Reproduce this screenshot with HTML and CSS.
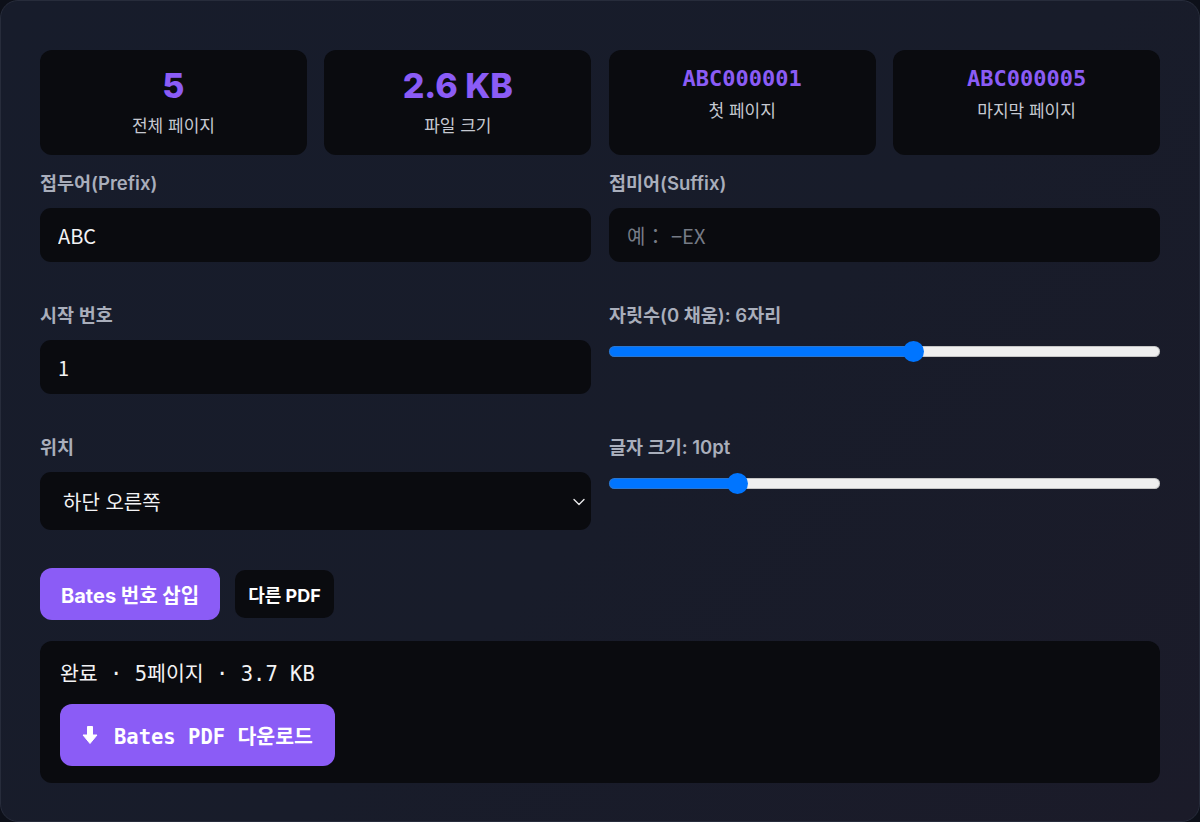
FILE: index.html
```html
<!DOCTYPE html>
<html lang="ko">
<head>
<meta charset="utf-8">
<title>Bates 번호 삽입</title>
<link rel="stylesheet" href="styles.css">
</head>
<body>
<main class="panel">
  <section class="stats">
    <div class="stat">
      <div class="stat-value">5</div>
      <div class="stat-label">전체 페이지</div>
    </div>
    <div class="stat">
      <div class="stat-value">2.6 KB</div>
      <div class="stat-label">파일 크기</div>
    </div>
    <div class="stat">
      <div class="stat-value mono">ABC000001</div>
      <div class="stat-label">첫 페이지</div>
    </div>
    <div class="stat">
      <div class="stat-value mono">ABC000005</div>
      <div class="stat-label">마지막 페이지</div>
    </div>
  </section>

  <section class="form">
    <label class="field">
      <span class="field-label">접두어(Prefix)</span>
      <input class="text-input" type="text" value="ABC">
    </label>
    <label class="field">
      <span class="field-label">접미어(Suffix)</span>
      <input class="text-input" type="text" placeholder="예： −EX">
    </label>
    <label class="field">
      <span class="field-label">시작 번호</span>
      <input class="text-input" type="number" value="1">
    </label>
    <label class="field">
      <span class="field-label">자릿수(0 채움): 6자리</span>
      <input class="range" type="range" min="1" max="10" value="6" style="--p: 0.5556">
    </label>
    <label class="field">
      <span class="field-label">위치</span>
      <span class="select-wrap">
        <select class="select">
          <option>하단 오른쪽</option>
          <option>하단 가운데</option>
          <option>하단 왼쪽</option>
        </select>
        <svg class="chevron" width="12" height="8" viewBox="0 0 12 8" aria-hidden="true">
          <path d="M1 1.5 L6 6.5 L11 1.5" fill="none" stroke="#e8e8ea" stroke-width="1.4" stroke-linecap="round" stroke-linejoin="round"/>
        </svg>
      </span>
    </label>
    <label class="field">
      <span class="field-label">글자 크기: 10pt</span>
      <input class="range" type="range" min="6" max="24" value="10" style="--p: 0.2222">
    </label>
  </section>

  <div class="actions">
    <button class="btn btn-primary" type="button">Bates 번호 삽입</button>
    <button class="btn btn-dark" type="button">다른 PDF</button>
  </div>

  <section class="result">
    <div class="result-text">완료 · 5페이지 · 3.7 KB</div>
    <button class="btn-download" type="button">
      <svg class="down-arrow" width="16" height="20" viewBox="0 0 16 20" aria-hidden="true">
        <path d="M5.5 1.5 H10.5 V10 H15 L8 18.5 L1 10 H5.5 Z" fill="#ffffff" stroke="#ffffff" stroke-width="1" stroke-linejoin="round"/>
      </svg>
      <span>Bates PDF 다운로드</span>
    </button>
  </section>
</main>
</body>
</html>
```

FILE: styles.css
```css
* {
  box-sizing: border-box;
}

html,
body {
  margin: 0;
  height: 100%;
}

body {
  background: #0d1019;
  font-family: Inter, "Noto Sans CJK KR", sans-serif;
  color: #e9eaee;
}

.panel {
  height: 822px;
  border: 1px solid #272c3b;
  border-radius: 18px;
  background: linear-gradient(135deg, #171c2b 0%, #181c2a 55%, #1b1b29 100%);
  padding: 49px 39px 0;
  display: flex;
  flex-direction: column;
}

/* summary cards */
.stats {
  display: grid;
  grid-template-columns: repeat(4, 1fr);
  gap: 17.5px;
}

.stat {
  height: 105px;
  background: #0a0b0f;
  border-radius: 12px;
  padding-top: 16px;
  display: flex;
  flex-direction: column;
  align-items: center;
  gap: 6px;
}

.stat-value {
  font-size: 34px;
  font-weight: 800;
  line-height: 1.2;
  color: #8b5cf6;
}

.stat-value.mono {
  font-family: "DejaVu Sans Mono", monospace;
  font-size: 22px;
  font-weight: 700;
}

.stat-label {
  font-family: "Noto Sans CJK KR", sans-serif;
  font-size: 17px;
  line-height: 24px;
  color: #c6c9d1;
}

/* settings form */
.form {
  margin-top: 16px;
  display: grid;
  grid-template-columns: 1fr 1fr;
  column-gap: 18px;
  row-gap: 41px;
  align-items: start;
}

.field {
  display: flex;
  flex-direction: column;
  gap: 13px;
}

.field-label {
  font-size: 18.5px;
  font-weight: 600;
  line-height: 24px;
  color: #a9aebb;
}

.text-input,
.select {
  width: 100%;
  border: none;
  outline: none;
  border-radius: 11px;
  background: #0a0b0f;
  color: #f3f3f5;
  font-family: "Noto Sans CJK KR", sans-serif;
  font-size: 20px;
}

.text-input {
  height: 54px;
  padding: 0 18px;
  -moz-appearance: textfield;
}

.text-input::-webkit-outer-spin-button,
.text-input::-webkit-inner-spin-button {
  -webkit-appearance: none;
  margin: 0;
}

.text-input::placeholder {
  color: #767b86;
}

.select-wrap {
  position: relative;
  display: block;
}

.select {
  height: 58px;
  padding: 0 40px 0 23px;
  -webkit-appearance: none;
  appearance: none;
}

.chevron {
  position: absolute;
  right: 6px;
  top: 26px;
  pointer-events: none;
}

/* sliders */
.range {
  -webkit-appearance: none;
  appearance: none;
  width: 100%;
  height: 22px;
  margin: 0;
  background: transparent;
}

.range::-webkit-slider-runnable-track {
  height: 11px;
  border-radius: 6px;
  background: linear-gradient(to right, #0075ff calc(10px + var(--p) * (100% - 21px)), #efefef 0);
  box-shadow: inset 0 0 0 1px rgba(120, 120, 120, 0.35);
}

.range::-webkit-slider-thumb {
  -webkit-appearance: none;
  appearance: none;
  width: 21px;
  height: 21px;
  margin-top: -5px;
  border-radius: 50%;
  background: #0075ff;
  border: none;
}

/* buttons */
.actions {
  margin-top: 38px;
  display: flex;
  align-items: center;
  gap: 15px;
}

.btn {
  border: none;
  color: #ffffff;
  font-family: Inter, "Noto Sans CJK KR", sans-serif;
  font-weight: 700;
  cursor: pointer;
}

.btn-primary {
  height: 52px;
  padding: 0 21px;
  border-radius: 12px;
  background: #8b5cf6;
  font-size: 20px;
}

.btn-dark {
  height: 48px;
  padding: 0 13px;
  border-radius: 10px;
  background: #0a0b0f;
  font-size: 18px;
}

/* result */
.result {
  margin-top: 21px;
  height: 142px;
  background: #0a0b0f;
  border-radius: 12px;
  padding: 19px 20px 0;
  display: flex;
  flex-direction: column;
  align-items: flex-start;
  gap: 16px;
}

.result-text {
  font-family: "DejaVu Sans Mono", "Noto Sans CJK KR", monospace;
  font-size: 20.5px;
  line-height: 28px;
  color: #f3f3f5;
}

.btn-download {
  height: 62px;
  padding: 0 22px 0 22px;
  border: none;
  border-radius: 12px;
  background: #8b5cf6;
  color: #ffffff;
  font-family: "DejaVu Sans Mono", "Noto Sans CJK KR", monospace;
  font-size: 20.5px;
  font-weight: 700;
  display: flex;
  align-items: center;
  gap: 16px;
  cursor: pointer;
}

.down-arrow {
  flex: none;
}
```
